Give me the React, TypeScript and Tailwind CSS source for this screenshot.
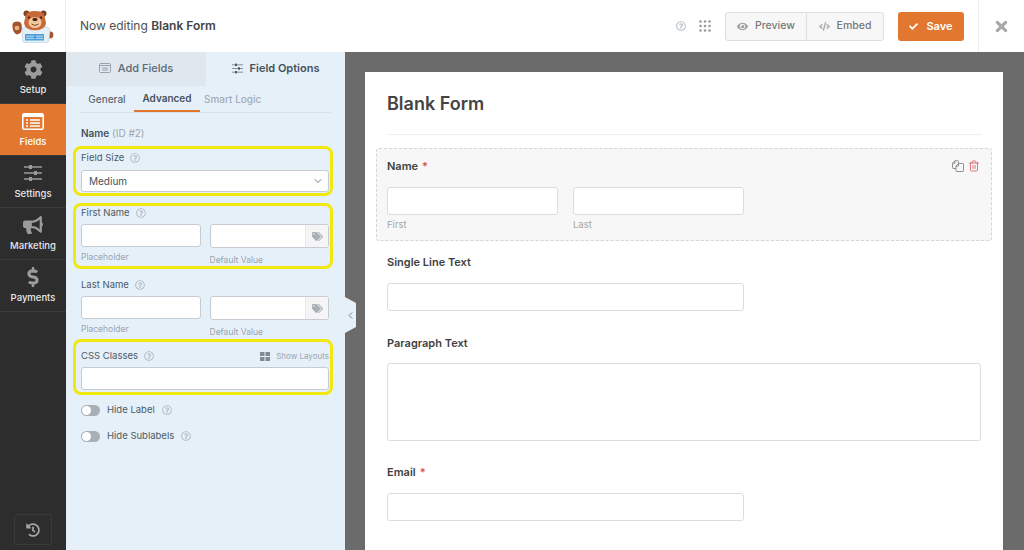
import type { ReactNode } from "react";
import { FaBullhorn, FaCheck, FaCode, FaCog, FaDollarSign, FaEye, FaHistory, FaRegQuestionCircle, FaTags, FaTimes } from "react-icons/fa";
import { ChevronDown, ChevronLeft, Trash2 } from "lucide-react";

const Help = ({ className = "" }: { className?: string }) => (
	<FaRegQuestionCircle size={10} className={`text-[#b4bcc5] ${className}`} />
);

const SlidersIcon = ({ size = 18, strokeWidth = 1.6 }: { size?: number; strokeWidth?: number }) => (
	<svg width={size} height={size} viewBox="0 0 18 18" fill="none" stroke="currentColor" strokeWidth={strokeWidth}>
		<path d="M0 3h18M0 9h18M0 15h18" />
		<rect x="5" y="1" width="3" height="4" fill="currentColor" stroke="none" />
		<rect x="10" y="7" width="3" height="4" fill="currentColor" stroke="none" />
		<rect x="5" y="13" width="3" height="4" fill="currentColor" stroke="none" />
	</svg>
);

const FieldsIcon = () => (
	<svg width="22" height="17" viewBox="0 0 22 17" fill="none">
		<rect x="0.8" y="0.8" width="20.4" height="15.4" rx="1.5" stroke="white" strokeWidth="1.6" />
		<rect x="1" y="1" width="20" height="3" fill="white" />
		<path d="M4 7h2M8 7h10M4 10h2M8 10h10M4 13h2M8 13h10" stroke="white" strokeWidth="1.3" />
	</svg>
);

const DuplicateIcon = () => (
	<svg width="12" height="12" viewBox="0 0 12 12" fill="none" stroke="#8f8f8f" strokeWidth="1" strokeLinejoin="round">
		<path d="M4 8.5H1.2a.7.7 0 0 1-.7-.7V3.2L3 .7h2.8a.7.7 0 0 1 .7.7V3.5" />
		<path d="M3 .7v2.5H.5" />
		<path d="M6.5 3.5h4.3a.7.7 0 0 1 .7.7v6.6a.7.7 0 0 1-.7.7H4.7a.7.7 0 0 1-.7-.7V6z" />
		<path d="M6.5 3.5V6H4" />
	</svg>
);

const BearLogo = () => (
	<svg width="42" height="33" viewBox="0 0 42 33">
		<circle cx="38" cy="25" r="3.4" fill="#a5532c" />
		<path d="M10 20 Q10 17 14 17 L33 17 Q38 17 38 21 L37 30 Q37 32.5 34 32.5 L13 32.5 Q10.5 32.5 10.5 30 Z" fill="#e3f0f8" stroke="#b3cddd" strokeWidth="0.6" />
		<rect x="13" y="24" width="19" height="6.5" fill="#4f9fd8" />
		<path d="M14 26.2h8M24 26.2h7M14 28.4h8M24 28.4h7" stroke="#d9ecf8" strokeWidth="0.8" />
		<path d="M16 18 L23 23 L30 18 Z" fill="#f6fbfe" stroke="#b3cddd" strokeWidth="0.5" />
		<circle cx="14.5" cy="3.5" r="3" fill="#7c4327" />
		<circle cx="31.5" cy="3.5" r="3" fill="#7c4327" />
		<path d="M13.5 6 Q14.5 1 23 1 Q31.5 1 32.5 6 L34 13 Q33.5 20 23 20.5 Q12.5 20 12 13 Z" fill="#c8693a" />
		<ellipse cx="23" cy="12.5" rx="6.5" ry="5.5" fill="#f3c9a0" />
		<ellipse cx="23" cy="9.5" rx="2.6" ry="1.7" fill="#4a2616" />
		<path d="M19.5 14 Q23 17 26.5 14" stroke="#7c4327" strokeWidth="1" fill="none" />
		<circle cx="17" cy="7.5" r="1.1" fill="#3a1e10" />
		<circle cx="29" cy="7.5" r="1.1" fill="#3a1e10" />
		<path d="M0.5 17 Q0 13 2.5 12 Q8 10.5 9.5 14 Q10.5 20 8.5 23 L5 24.5 Q1 23 0.5 17 Z" fill="#a5532c" />
		<ellipse cx="5" cy="18" rx="2.4" ry="2.2" fill="#e9b48b" />
	</svg>
);

const NavItem = ({ icon, label, active }: { icon: ReactNode; label: string; active?: boolean }) => (
	<div
		className={`flex h-[52px] flex-col items-center justify-end border-b border-[#3a3a3a] pb-[7px] text-[9.5px] font-medium ${
			active ? "bg-[#e27730] text-white" : "text-[#e8e8e8]"
		}`}
	>
		<div className={`flex h-[20px] items-center ${active ? "" : "text-[#9b9b9b]"}`}>{icon}</div>
		<span className="mt-[4px] leading-[13px]">{label}</span>
	</div>
);

const Group = ({ highlight, className = "", children }: { highlight?: boolean; className?: string; children: ReactNode }) => (
	<div className={`rounded-[8px] border-[3px] pl-[5px] pr-[1px] ${highlight ? "border-[#f2e70f]" : "border-transparent"} ${className}`}>
		{children}
	</div>
);

const OptionLabel = ({ text }: { text: string }) => (
	<div className="flex items-center text-[9.5px] leading-[14px] text-[#4d5a66]">
		<span>{text}</span>
		<Help className="ml-[6px]" />
	</div>
);

const NameRow = ({ label }: { label: string }) => (
	<>
		<OptionLabel text={label} />
		<div className="mt-[4px] flex gap-[9px]">
			<div className="w-[120px]">
				<div className="h-[23px] rounded-[3px] border border-[#c5ccd3] bg-white" />
				<div className="mt-[5px] text-[8.5px] leading-[11px] text-[#9aa5b0]">Placeholder</div>
			</div>
			<div className="w-[120px]">
				<div className="flex h-[24px] overflow-hidden rounded-[3px] border border-[#c5ccd3] bg-white">
					<div className="flex-1" />
					<div className="flex w-[23px] items-center justify-center border-l border-[#e4e7ea] bg-[#f5f5f5] text-[#a8b0b8]">
						<FaTags size={11} />
					</div>
				</div>
				<div className="mt-[7px] text-[8.5px] leading-[11px] text-[#9aa5b0]">Default Value</div>
			</div>
		</div>
	</>
);

const Toggle = ({ label, helpGap }: { label: string; helpGap: string }) => (
	<div className="flex h-[14px] items-center pl-[81px] text-[9.5px] text-[#4d5a66]">
		<div className="flex h-[11px] w-[19px] items-center rounded-full bg-[#a9afb6] pl-[1px]">
			<div className="h-[9px] w-[9px] rounded-full bg-white" />
		</div>
		<span className="ml-[7px]">{label}</span>
		<Help className={helpGap} />
	</div>
);

const FieldLabel = ({ text, required }: { text: string; required?: boolean }) => (
	<div className="text-[11px] font-semibold leading-[14px] text-[#3f3f3f]">
		{text}
		{required && <span className="ml-[4px] text-[#d9534f]">*</span>}
	</div>
);

const inputBox = "rounded-[3px] border border-[#dcdcdc] bg-white";

export default function App() {
	return (
		<div className="flex h-[550px] w-[1024px] flex-col overflow-hidden font-['Inter',sans-serif]">
			{/* Top bar */}
			<header className="flex h-[52px] shrink-0 items-center bg-white">
				<div className="flex h-full w-[66px] items-center justify-center border-r border-[#eeeeee]">
					<BearLogo />
				</div>
				<div className="ml-[14px] text-[12px] text-[#4f4f4f]">
					Now editing <span className="font-semibold text-[#444444]">Blank Form</span>
				</div>
				<div className="ml-auto flex h-full items-center">
					<Help className="text-[#a9a9a9]" />
					<svg className="ml-[13px]" width="12" height="12" viewBox="0 0 12 12" fill="#9a9a9a">
						{[1.5, 6, 10.5].flatMap((y) =>
							[1.5, 6, 10.5].map((x) => <circle key={`${x}-${y}`} cx={x} cy={y} r="1.3" />),
						)}
					</svg>
					<div className="ml-[14px] flex h-[29px] w-[159px] rounded-[3px] border border-[#dedede] bg-[#f7f7f7] text-[10.5px] font-medium text-[#777777]">
						<div className="flex w-[81px] items-center justify-center gap-[7px] border-r border-[#dedede]">
							<FaEye size={11} className="text-[#a0a0a0]" />
							Preview
						</div>
						<div className="flex flex-1 items-center justify-center gap-[7px]">
							<FaCode size={11} className="text-[#b0b0b0]" />
							Embed
						</div>
					</div>
					<div className="ml-[14px] flex h-[29px] w-[66px] items-center justify-center gap-[8px] rounded-[3px] bg-[#e27730] text-[11px] font-semibold text-white">
						<FaCheck size={9} />
						Save
					</div>
					<div className="ml-[14px] flex h-full w-[46px] items-center justify-center border-l border-[#eeeeee] text-[#a9a9a9]">
						<FaTimes size={17} />
					</div>
				</div>
			</header>

			<div className="flex min-h-0 flex-1">
				{/* Sidebar */}
				<nav className="flex w-[66px] shrink-0 flex-col bg-[#2d2d2d]">
					<NavItem icon={<FaCog size={19} />} label="Setup" />
					<NavItem icon={<FieldsIcon />} label="Fields" active />
					<NavItem icon={<SlidersIcon />} label="Settings" />
					<NavItem icon={<FaBullhorn size={20} />} label="Marketing" />
					<NavItem icon={<FaDollarSign size={20} />} label="Payments" />
					<div className="mx-[14px] mb-[5px] mt-auto flex h-[31px] items-center justify-center rounded-[2px] border border-[#3a3a3a] text-[#a5a5a5]">
						<FaHistory size={14} />
					</div>
				</nav>

				{/* Options panel */}
				<aside className="relative flex w-[279px] shrink-0 flex-col bg-[#e6f0f9]">
					<div className="flex h-[34px] text-[11px] font-medium">
						<div className="flex w-[140px] items-center justify-center gap-[7px] bg-[#dfe7ef] pb-[2px] text-[#5b6873]">
							<svg width="12" height="10" viewBox="0 0 12 10" fill="none" stroke="#98a2ac" strokeWidth="1">
								<rect x="0.5" y="0.5" width="11" height="9" rx="1" />
								<path d="M0.5 2.5h11M3 5h6M3 7h6" />
							</svg>
							Add Fields
						</div>
						<div className="flex flex-1 items-center justify-center gap-[7px] pb-[2px] font-semibold text-[#46525d]">
							<SlidersIcon size={11} strokeWidth={1} />
							Field Options
						</div>
					</div>

					<div className="mx-[14px] flex h-[27px] border-b border-[#d8e2ec] pt-[1px] text-[10px] font-medium">
						<div className="flex w-[54px] items-center justify-center text-[#5b6873]">General</div>
						<div className="flex w-[66px] items-center justify-center border-b-2 border-[#e27730] font-semibold text-[#46525d]">
							Advanced
						</div>
						<div className="ml-[4px] flex items-center text-[#a3adb7]">Smart Logic</div>
					</div>

					<div className="ml-[15px] mt-[13px] text-[10px] leading-[14px] text-[#9aa5b0]">
						<span className="font-semibold text-[#46525d]">Name</span> (ID #2)
					</div>

					<Group highlight className="ml-[7px] mt-[6px] h-[50px] w-[260px] pt-[2px]">
						<OptionLabel text="Field Size" />
						<div className="mt-[5px] flex h-[22px] items-center justify-between rounded-[3px] border border-[#c5ccd3] bg-white px-[7px] text-[10px] text-[#46525d]">
							Medium
							<ChevronDown size={12} strokeWidth={1.5} className="-mr-[3px]" />
						</div>
					</Group>

					<Group highlight className="ml-[7px] mt-[7px] h-[66px] w-[260px]">
						<NameRow label="First Name" />
					</Group>

					<Group className="ml-[7px] mt-[5px] h-[62px] w-[260px] pt-[1px]">
						<NameRow label="Last Name" />
					</Group>

					<Group highlight className="ml-[7px] mt-[3px] h-[56px] w-[260px] pt-[7px]">
						<div className="flex items-center justify-between">
							<OptionLabel text="CSS Classes" />
							<div className="flex items-center gap-[6px] text-[8px] text-[#9aa5b0]">
								<svg width="10" height="9" viewBox="0 0 10 9" fill="#7f8a94">
									<rect width="4.5" height="4" />
									<rect x="5.5" width="4.5" height="4" />
									<rect y="5" width="4.5" height="4" />
									<rect x="5.5" y="5" width="4.5" height="4" />
								</svg>
								Show Layouts
							</div>
						</div>
						<div className="mt-[4px] h-[23px] rounded-[3px] border border-[#c5ccd3] bg-white" />
					</Group>

					<div className="-ml-[66px] mt-[8px] flex flex-col gap-[12px]">
						<Toggle label="Hide Label" helpGap="ml-[7px]" />
						<Toggle label="Hide Sublabels" helpGap="ml-[7px]" />
					</div>

					{/* Collapse handle sticking out over the canvas */}
					<div className="absolute left-full top-[245px] flex h-[36px] w-[11px] items-center justify-center bg-[#e6f0f9] text-[#6f7a85] [clip-path:polygon(0_0,100%_17%,100%_83%,0_100%)]">
						<ChevronLeft size={11} strokeWidth={2} />
					</div>
				</aside>

				{/* Form canvas */}
				<main className="min-w-0 flex-1 overflow-hidden bg-[#6b6b6b] pl-[20px] pr-[21px] pt-[20px]">
					<div className="h-[600px] bg-white pt-[20px]">
						<h1 className="ml-[22px] text-[18px] font-semibold leading-[23px] text-[#444444]">Blank Form</h1>
						<div className="ml-[22px] mr-[21px] mt-[19px] h-px bg-[#eeeeee]" />

						<div className="relative mx-[11px] mt-[13px] h-[93px] rounded-[3px] border border-dashed border-[#d5d5d5] bg-[#f7f7f7] px-[10px] pt-[10px]">
							<FieldLabel text="Name" required />
							<div className="absolute right-[11px] top-[11px] flex items-center gap-[4px]">
								<DuplicateIcon />
								<Trash2 size={12} strokeWidth={1.7} className="text-[#d9606a]" />
							</div>
							<div className="mt-[14px] flex gap-[15px]">
								<div className="w-[171px]">
									<div className={`h-[28px] ${inputBox}`} />
									<div className="mt-[4px] text-[9.5px] leading-[12px] text-[#a5a5a5]">First</div>
								</div>
								<div className="w-[171px]">
									<div className={`h-[28px] ${inputBox}`} />
									<div className="mt-[4px] text-[9.5px] leading-[12px] text-[#a5a5a5]">Last</div>
								</div>
							</div>
						</div>

						<div className="ml-[22px] mr-[22px]">
							<div className="mt-[14px]">
								<FieldLabel text="Single Line Text" />
							</div>
							<div className={`mt-[14px] h-[28px] w-[357px] ${inputBox}`} />
							<div className="mt-[25px]">
								<FieldLabel text="Paragraph Text" />
							</div>
							<div className={`mt-[13px] h-[78px] ${inputBox}`} />
							<div className="mt-[24px]">
								<FieldLabel text="Email" required />
							</div>
							<div className={`mt-[14px] h-[28px] w-[357px] ${inputBox}`} />
							<div className="mt-[27px]">
								<FieldLabel text="Dropdown" />
							</div>
						</div>
					</div>
				</main>
			</div>
		</div>
	);
}
